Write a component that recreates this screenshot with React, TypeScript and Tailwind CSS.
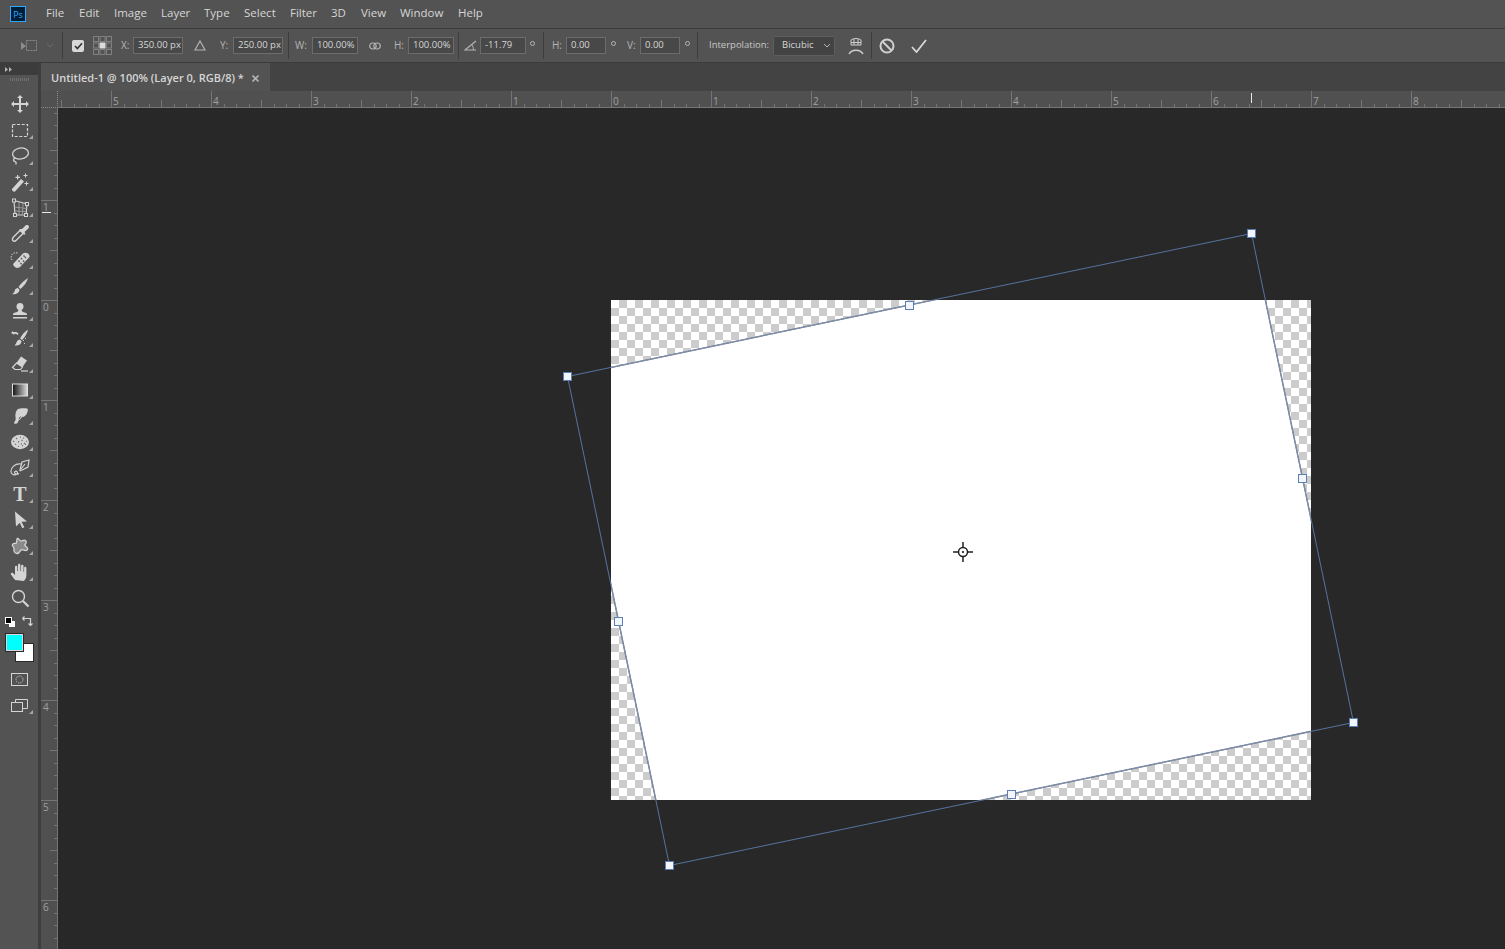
const UI_FONT = { fontFamily: '"Open Sans", "Liberation Sans", sans-serif' }

const MENU = [
  { label: 'File', width: 'w-[33px]' },
  { label: 'Edit', width: 'w-[35px]' },
  { label: 'Image', width: 'w-[47px]' },
  { label: 'Layer', width: 'w-[43px]' },
  { label: 'Type', width: 'w-[40px]' },
  { label: 'Select', width: 'w-[46px]' },
  { label: 'Filter', width: 'w-[41px]' },
  { label: '3D', width: 'w-[30px]' },
  { label: 'View', width: 'w-[39px]' },
  { label: 'Window', width: 'w-[58px]' },
  { label: 'Help', width: 'w-[30px]' },
]

function Sep({ className }: { className: string }) {
  return <div className={`w-px h-[27px] bg-[#3d3d3d] shrink-0 ${className}`} />
}

function Label({ text, className }: { text: string; className: string }) {
  return <span className={`text-[10px] text-[#b4b4b4] shrink-0 ${className}`}>{text}</span>
}

function Field({ value, className }: { value: string; className: string }) {
  return (
    <div className={`h-[17px] shrink-0 flex items-center pl-[4px] bg-[#484848] border border-[#6c6c6c] text-[9.5px] text-[#d6d6d6] whitespace-nowrap overflow-hidden ${className}`}>
      {value}
    </div>
  )
}

function Deg({ className }: { className: string }) {
  return <div className={`w-[5px] h-[5px] rounded-full border border-[#b4b4b4] shrink-0 -translate-y-[2px] ${className}`} />
}

function OptionsBar() {
  return (
    <div className="h-[34px] flex items-center bg-[#535353] border-t border-[#3b3b3b] shrink-0">
      <svg width="17" height="14" viewBox="0 0 17 14" className="ml-[21px] shrink-0" fill="none">
        <path d="M0 3l5 4-5 4z" fill="#8c8c8c" />
        <rect x="5.5" y="1.5" width="10" height="10" stroke="#8c8c8c" strokeDasharray="2 1" />
      </svg>
      <svg width="8" height="5" viewBox="0 0 8 5" className="ml-[8px] shrink-0" fill="none">
        <path d="M1 1l3 3 3-3" stroke="#6c6c6c" />
      </svg>
      <Sep className="ml-[8px]" />
      <div className="ml-[9px] w-[12px] h-[12px] rounded-[2px] bg-[#d8d8d8] shrink-0 flex items-center justify-center">
        <svg width="9" height="8" viewBox="0 0 9 8" fill="none">
          <path d="M1 4l2.4 2.6L8 1.2" stroke="#333" strokeWidth="1.6" />
        </svg>
      </div>
      <svg width="19" height="19" viewBox="0 0 19 19" className="ml-[9px] shrink-0" fill="none" stroke="#808080">
        <rect x="0.5" y="0.5" width="5" height="5" />
        <rect x="7" y="0.5" width="5" height="5" />
        <rect x="13.5" y="0.5" width="5" height="5" />
        <rect x="0.5" y="7" width="5" height="5" />
        <rect x="7" y="7" width="5" height="5" fill="#dcdcdc" stroke="#dcdcdc" />
        <rect x="13.5" y="7" width="5" height="5" />
        <rect x="0.5" y="13.5" width="5" height="5" />
        <rect x="7" y="13.5" width="5" height="5" />
        <rect x="13.5" y="13.5" width="5" height="5" />
      </svg>
      <Label text="X:" className="ml-[9px] w-[12px]" />
      <Field value="350.00 px" className="w-[50px]" />
      <svg width="12" height="11" viewBox="0 0 12 11" className="ml-[11px] shrink-0" fill="none">
        <path d="M6 1L11 10H1z" stroke="#b4b4b4" strokeWidth="1.2" />
      </svg>
      <Label text="Y:" className="ml-[14px] w-[13px]" />
      <Field value="250.00 px" className="w-[50px]" />
      <Sep className="ml-[5px]" />
      <Label text="W:" className="ml-[6px] w-[17px]" />
      <Field value="100.00%" className="w-[46px]" />
      <svg width="12" height="8" viewBox="0 0 12 8" className="ml-[11px] shrink-0" fill="none">
        <rect x="0.7" y="1" width="6.5" height="6" rx="3" stroke="#b4b4b4" strokeWidth="1.2" />
        <rect x="4.8" y="1" width="6.5" height="6" rx="3" stroke="#b4b4b4" strokeWidth="1.2" />
      </svg>
      <Label text="H:" className="ml-[13px] w-[14px]" />
      <Field value="100.00%" className="w-[46px]" />
      <Sep className="ml-[4px]" />
      <svg width="13" height="11" viewBox="0 0 13 11" className="ml-[5px] shrink-0" fill="none">
        <path d="M12 1L1 10h11" stroke="#b4b4b4" strokeWidth="1.2" />
        <path d="M8 5c1 1 1.400 3 1.400 5" stroke="#b4b4b4" />
      </svg>
      <Field value="-11.79" className="ml-[3px] w-[46px]" />
      <Deg className="ml-[4px]" />
      <Sep className="ml-[8px]" />
      <Label text="H:" className="ml-[8px] w-[14px]" />
      <Field value="0.00" className="w-[40px]" />
      <Deg className="ml-[5px]" />
      <Label text="V:" className="ml-[11px] w-[13px]" />
      <Field value="0.00" className="w-[40px]" />
      <Deg className="ml-[5px]" />
      <Sep className="ml-[7px]" />
      <span className="ml-[11px] w-[64px] shrink-0 whitespace-nowrap text-[9.5px] text-[#c8c8c8]">Interpolation:</span>
      <div className="w-[62px] h-[20px] shrink-0 flex items-center justify-between pl-[8px] pr-[3px] bg-[#434343] border border-[#5e5e5e] rounded-[2px] text-[9.5px] text-[#d6d6d6]">
        Bicubic
        <svg width="8" height="5" viewBox="0 0 8 5" fill="none">
          <path d="M1 1l3 3 3-3" stroke="#b4b4b4" />
        </svg>
      </div>
      <svg width="16" height="18" viewBox="0 0 16 18" className="ml-[13px] shrink-0" fill="none" stroke="#d0d0d0">
        <path d="M3 3c3-2 7-2 10 0v5H3z" />
        <path d="M6 2v6M10 2v6M3 5.500h10" />
        <path d="M1 17c3-5 11-5 14 0" strokeWidth="1.4" />
      </svg>
      <Sep className="ml-[7px]" />
      <svg width="16" height="16" viewBox="0 0 16 16" className="ml-[7px] shrink-0" fill="none" stroke="#d0d0d0" strokeWidth="2">
        <circle cx="8" cy="8" r="6.500" />
        <path d="M3.500 3.500l9 9" />
      </svg>
      <svg width="16" height="14" viewBox="0 0 16 14" className="ml-[16px] shrink-0" fill="none" stroke="#d8d8d8" strokeWidth="1.800">
        <path d="M1 8l4.500 5L15 1" />
      </svg>
    </div>
  )
}

const C = '#d4d4d4'

const TOOLS: { id: string; more: boolean; draw: React.ReactNode }[] = [
  {
    id: 'move',
    more: false,
    draw: <path d="M10 1l3 3h-2v5h5V7l3 3-3 3v-2h-5v5h2l-3 3-3-3h2v-5H4v2l-3-3 3-3v2h5V4H7z" fill={C} />,
  },
  {
    id: 'marquee',
    more: true,
    draw: <rect x="2.500" y="4.500" width="15" height="12" fill="none" stroke={C} strokeWidth="1.200" strokeDasharray="3 1.600" />,
  },
  {
    id: 'lasso',
    more: true,
    draw: (
      <g fill="none" stroke={C} strokeWidth="1.300">
        <ellipse cx="10.500" cy="7.500" rx="8" ry="5.500" transform="rotate(-8 10.500 7.500)" />
        <path d="M5 12c-2 1-2 3 0 3.500 1 .3 1.500 1 .8 3" />
      </g>
    ),
  },
  {
    id: 'wand',
    more: true,
    draw: (
      <g fill={C}>
        <path d="M2 17l9-10 3 2.500-9 10c-1 .8-3.500-1-3-2.500z" />
        <path d="M7 3h1.200v1.800H10V6H8.200v1.500H7V6H5.400V4.800H7zM15 1.500h1V3h1.500v1H16v1.500h-1V4h-1.500V3H15zM16 9.500h1V11h1.500v1H17v1.500h-1V12h-1.500v-1H16z" />
      </g>
    ),
  },
  {
    id: 'crop',
    more: true,
    draw: (
      <g fill="none" stroke={C}>
        <path d="M4 2.500l13 3.500-1 11H5z" strokeWidth="1.200" />
        <path d="M9 4v13M13 5l-.5 12M4.500 9l12 1.500M5 13l11 .5" stroke="#9a9a9a" />
        <rect x="2.500" y="1" width="3" height="3" fill="#535353" />
        <rect x="15.500" y="4.500" width="3" height="3" fill="#535353" />
        <rect x="3.500" y="15.500" width="3" height="3" fill="#535353" />
        <rect x="14.500" y="15.500" width="3" height="3" fill="#535353" />
      </g>
    ),
  },
  {
    id: 'eyedropper',
    more: true,
    draw: (
      <g>
        <path d="M3.500 13l7-7 3 3-7 7c-1 1-2.500 1.800-3.500.8S2.500 14 3.500 13z" fill="none" stroke={C} strokeWidth="1.400" />
        <path d="M10 5l2 0 3.500-3.500c1-1 3.500-.5 3.500 1.500 0 .8-.4 1.200-1 1.800L14.500 8l1 2-1.500.8L9 6.500z" fill={C} />
      </g>
    ),
  },
  {
    id: 'heal',
    more: true,
    draw: (
      <g>
        <path d="M3.500 13.500l9.500-10c1.800-1.800 7-.5 6.500 3.500l-9 9.500c-2 2-4.500 1.500-5.500.5s-2.500-2-1.500-3.500z" fill={C} />
        <path d="M8.500 10.500l1.200 1.200M11 8l1.200 1.200M10.500 13l1.200 1.200M13 10.500l1.200 1.200M13.500 5.500l1.200 1.200M16 8l-1-1" stroke="#555" strokeWidth="1.400" />
        <path d="M2 10C-.5 6.500 2.500 1.500 7.500 3" fill="none" stroke={C} strokeDasharray="1.400 1.200" />
      </g>
    ),
  },
  {
    id: 'brush',
    more: true,
    draw: (
      <g fill={C}>
        <path d="M18 2c-3 2-7 5-9.500 9l2 2C14 10 17 6 18 2z" />
        <path d="M7.800 12c-2.500.3-3 2-3.300 3.500-.2 1-1 1.800-2.500 2.500 3.500.8 7-.5 7.600-4.200z" />
      </g>
    ),
  },
  {
    id: 'stamp',
    more: true,
    draw: (
      <g fill={C}>
        <circle cx="10" cy="4.500" r="3.500" />
        <path d="M8.500 7h3c0 2 .5 3 3 3.500 2 .3 2.500 1 2.500 2.500H3c0-1.500.5-2.200 2.500-2.500C8 10 8.500 9 8.500 7z" />
        <rect x="3" y="15" width="14" height="1.500" />
      </g>
    ),
  },
  {
    id: 'history',
    more: true,
    draw: (
      <g fill={C}>
        <path d="M18 1.500c-3 2-6 5-8 9l2 1.500c3-3 5-6.500 6-10.500z" />
        <path d="M9.500 11.500c-2 .3-2.500 1.800-3 3-.3 1-1 2-2 3 3.500.5 7-.8 7-4.500z" />
        <path d="M1 5l2-2 .2 1.300C5 3.800 7 4 8.500 5.500L7.800 7C6.500 6 5 5.600 3.800 6L5 7.200z" />
        <path d="M13 12h1v1h-1zM15 10h1v1h-1zM14 15h1v1h-1z" />
      </g>
    ),
  },
  {
    id: 'eraser',
    more: true,
    draw: (
      <g>
        <path d="M11 2.500l6 4-4.500 6.500-6-4z" fill={C} />
        <path d="M6.500 9l6 4-2 2.500H5L2.500 13.500z" fill="none" stroke={C} strokeWidth="1.200" />
        <path d="M11 17h7" stroke={C} strokeWidth="1.200" />
      </g>
    ),
  },
  {
    id: 'gradient',
    more: true,
    draw: (
      <g>
        <defs>
          <linearGradient id="tool-grad">
            <stop offset="0" stopColor="#111" />
            <stop offset="1" stopColor="#ddd" />
          </linearGradient>
        </defs>
        <rect x="2.500" y="4" width="15" height="12" fill="url(#tool-grad)" stroke="#dedede" />
      </g>
    ),
  },
  {
    id: 'dodge',
    more: true,
    draw: (
      <g>
        <path d="M8 3c2-1 6-1 9-.5.800.2 1 1 .800 2-.5 3-2 5.500-4.500 6.500l-1.300-.3c-.5 1.500-1.500 2.500-3.200 3.500L7.500 17c-.5.800-2.500 1.200-3.300.5-.4-.4 0-1.200.4-1.700.8-1.200 1.400-2.500 1-4C5 9 5.500 5 8 3z" fill={C} />
        <path d="M9 13l1.500-2.500" stroke="#535353" />
      </g>
    ),
  },
  {
    id: 'sponge',
    more: true,
    draw: (
      <g>
        <ellipse cx="10" cy="10" rx="9" ry="7.200" fill={C} />
        <path d="M3 9l1.200.8M6 6l1 1M10 4.500l.8 1M14 5.500l-.8 1M17 9l-1 .5M5 12.500l1.200-.5M8 9.500l1.200.8M11.500 8l1 .8M14 11l1 .8M8 14l1 .6M12 14l1-.6M16 12.500l-1-.4M11 11.500l.8.8" stroke="#6a6a6a" strokeWidth="1.100" />
      </g>
    ),
  },
  {
    id: 'pen',
    more: true,
    draw: (
      <g fill="none" stroke={C} strokeWidth="1.200">
        <path d="M10 12l2-8 7-2-1 7-7 3.500c-1 .4-1.400-.2-1-.5z" />
        <path d="M11 11l4-5" />
        <path d="M11 6C5 5 .5 10 1 14c.4 3 4 3.500 6 2 1.500-1.200-.5-3.500-2-2.500-1.500 1.200 1 4 4 2" />
      </g>
    ),
  },
  {
    id: 'type',
    more: true,
    draw: (
      <text x="10" y="17" textAnchor="middle" fontSize="20" fontWeight="700" fontFamily='"Liberation Serif", serif' fill={C}>
        T
      </text>
    ),
  },
  {
    id: 'path',
    more: true,
    draw: <path d="M5 1.500L17 11.500l-5.500 .3 2.800 5.500-2 1-2.500-5.500L6 16.500z" fill={C} />,
  },
  {
    id: 'shape',
    more: true,
    draw: <path d="M8 2.500c1.500 1 2 3 3.500 2.500s2.500-1.500 4-.5c1.500 1.200.5 3-.5 4s1.500 2 2.500 3.500c.8 1.500-1 3-2.500 2.500s-3-1.500-4-.5-1.500 3.500-4 3.500-3.500-2.500-3-4.500-2.500-2.500-1.500-4.500c1-1.800 3-.5 3.800-1.500S6.500 1.500 8 2.500z" fill="#8a8a8a" stroke={C} strokeWidth="1.300" />,
  },
  {
    id: 'hand',
    more: true,
    draw: <path d="M5 18c-1.500-2-3-4-4-5.500-.8-1.400 1-2.500 2.200-1.300L5 13V5c0-1.700 2.300-1.700 2.300 0v4h.7V3c0-1.700 2.400-1.700 2.400 0v6h.7V4c0-1.700 2.400-1.700 2.400 0v6h.6V6c0-1.600 2.300-1.600 2.300 0v7.500c0 2.500-1.500 4.500-2.500 5.500z" fill={C} />,
  },
  {
    id: 'zoom',
    more: false,
    draw: (
      <g fill="none" stroke={C}>
        <circle cx="8.500" cy="8.500" r="6" strokeWidth="1.400" />
        <path d="M13 13l5.500 5.500" strokeWidth="2.200" />
      </g>
    ),
  },
]

function Toolbar() {
  return (
    <div className="w-[41px] shrink-0 flex flex-col bg-[#535353] border-r-[3px] border-[#3e3e3e]">
      <div className="h-[12px] bg-[#3c3c3c] flex items-center pl-[5px] shrink-0">
        <svg width="8" height="5" viewBox="0 0 8 5" fill="#b4b4b4">
          <path d="M0 0l3 2.500L0 5zM4 0l3 2.500L4 5z" />
        </svg>
      </div>
      <div className="h-[16px] flex justify-center pt-[3px] shrink-0">
        <div className="w-[19px] h-[3px] bg-[repeating-linear-gradient(90deg,#707070_0_1px,transparent_1px_2px)]" />
      </div>
      {TOOLS.map(tool => (
        <div key={tool.id} className="relative h-[26px] shrink-0 flex items-center justify-center pl-[1px]">
          <svg width="20" height="20" viewBox="0 0 20 20">{tool.draw}</svg>
          {tool.more && (
            <svg width="4" height="4" viewBox="0 0 4 4" className="absolute left-[29px] top-[18px]" fill="#a8a8a8">
              <path d="M4 0v4H0z" />
            </svg>
          )}
        </div>
      ))}
      {/* colour swatches */}
      <div className="relative h-[55px] shrink-0">
        <div className="absolute left-[5px] top-[6px] w-[7px] h-[7px] bg-black border border-white z-10" />
        <div className="absolute left-[9px] top-[10px] w-[6px] h-[6px] bg-white" />
        <svg width="11" height="11" viewBox="0 0 11 11" className="absolute left-[22px] top-[5px]" fill="none" stroke="#d4d4d4" strokeWidth="1.200">
          <path d="M1 2.500h7.500V9M0.500 2.500L2.500 .5M.5 2.500l2 2M6.500 7.500l2 2 2-2" />
        </svg>
        <div className="absolute left-[15px] top-[32px] w-[19px] h-[19px] bg-white border border-[#2a2a2a]" />
        <div className="absolute left-[5px] top-[22px] w-[19px] h-[19px] bg-[#00ffff] border border-[#2a2a2a] outline outline-[#d8d8d8] -outline-offset-2" />
      </div>
      <div className="h-[26px] shrink-0 flex items-center justify-center">
        <svg width="17" height="13" viewBox="0 0 17 13" fill="none" stroke="#d4d4d4">
          <rect x="0.500" y="0.500" width="16" height="12" />
          <circle cx="8.500" cy="6.500" r="3.500" strokeDasharray="1 1" />
        </svg>
      </div>
      <div className="relative h-[26px] shrink-0 flex items-center justify-center">
        <svg width="17" height="13" viewBox="0 0 17 13" fill="none" stroke="#d4d4d4">
          <rect x="0.500" y="3.500" width="11" height="9" />
          <path d="M4.500 3.500V.5h12v9h-5" />
        </svg>
        <svg width="4" height="4" viewBox="0 0 4 4" className="absolute left-[29px] top-[18px]" fill="#a8a8a8">
          <path d="M4 0v4H0z" />
        </svg>
      </div>
    </div>
  )
}

function HRuler() {
  const ticks = Array.from({ length: 120 }, (_, i) => i)
  const labels = [5, 4, 3, 2, 1, 0, 1, 2, 3, 4, 5, 6, 7, 8]
  return (
    <svg width="1447" height="17" viewBox="58 91 1447 17" className="block">
      {ticks.map(i => {
        const x = Math.round(11 + i * 12.5) + 0.5
        const len = i % 8 === 0 ? 17 : i % 4 === 0 ? 8 : 4
        return <path key={i} d={`M${x} 108v-${len}`} stroke="#757575" />
      })}
      <path d="M58 107.500h1447" stroke="#757575" />
      {labels.map((n, i) => (
        <text key={i} x={113 + i * 100} y="105" fontSize="10" fill="#a0a0a0" fontFamily='"Open Sans", sans-serif'>
          {n}
        </text>
      ))}
      <path d="M1251.500 93v10" stroke="#e8e8e8" />
    </svg>
  )
}

function VRuler() {
  const ticks = Array.from({ length: 68 }, (_, i) => i)
  const labels = [1, 0, 1, 2, 3, 4, 5, 6]
  return (
    <svg width="17" height="841" viewBox="41 108 17 841" className="block shrink-0">
      {ticks.map(i => {
        const y = Math.round(100 + i * 12.5) + 0.5
        const major = i % 8 === 0
        const len = major ? 17 : i % 4 === 0 ? 8 : 4
        return <path key={i} d={`M58 ${y}h-${len}`} stroke="#757575" />
      })}
      <path d="M57.500 108v841" stroke="#757575" />
      {labels.map((n, i) => (
        <text key={i} x="43" y={211 + i * 100} fontSize="10" fill="#a0a0a0" fontFamily='"Open Sans", sans-serif'>
          {n}
        </text>
      ))}
      <path d="M42 212.500h9" stroke="#e8e8e8" />
    </svg>
  )
}

const QUAD = '567.500,376.500 1251.500,233.500 1353.500,722.500 669.500,865.500'
const HANDLES = [
  [567, 376],
  [909, 305],
  [1251, 233],
  [1302, 478],
  [1353, 722],
  [1011, 794],
  [669, 865],
  [618, 621],
]

function DocumentCanvas() {
  return (
    <svg width="1447" height="841" viewBox="58 108 1447 841" className="block">
      <defs>
        <pattern id="checker" x="611" y="300" width="16" height="16" patternUnits="userSpaceOnUse">
          <rect width="16" height="16" fill="#fff" />
          <rect x="8" width="8" height="8" fill="#ccc" />
          <rect y="8" width="8" height="8" fill="#ccc" />
        </pattern>
        <clipPath id="doc">
          <rect x="611" y="300" width="700" height="500" />
        </clipPath>
      </defs>
      <rect x="611" y="300" width="700" height="500" fill="url(#checker)" />
      <polygon points={QUAD} fill="#fff" clipPath="url(#doc)" />
      <polygon points={QUAD} fill="none" stroke="#5673a0" strokeWidth="1" />
      <polygon points={QUAD} fill="none" stroke="#7f8ca3" strokeWidth="1.500" clipPath="url(#doc)" />
      {HANDLES.map(([x, y]) => (
        <rect key={`${x}-${y}`} x={x - 3.5} y={y - 3.5} width="8" height="8" fill="#f2f6fc" stroke="#5a7fb4" shapeRendering="crispEdges" />
      ))}
      <g stroke="#222" fill="none">
        <circle cx="963" cy="552" r="4.500" strokeWidth="1.500" />
        <path d="M953 552h5.500M967.500 552h5.500M963 542v5.500M963 556.500v5.500" strokeWidth="1.500" />
        <circle cx="963" cy="552" r="0.700" fill="#222" />
      </g>
    </svg>
  )
}

export default function App() {
  return (
    <div className="w-[1505px] h-[949px] overflow-hidden flex flex-col bg-[#282828]" style={UI_FONT}>
      {/* Menu bar */}
      <div className="h-[28px] flex items-center bg-[#535353] shrink-0">
        <div className="ml-[10px] w-[16px] h-[16px] bg-[#001e36] border border-[#31a8ff] flex items-center justify-center text-[9px] leading-none text-[#31a8ff]">
          Ps
        </div>
        <div className="ml-[20px] pb-[2px] flex text-[11.5px] text-[#d6d6d6]">
          {MENU.map(m => (
            <span key={m.label} className={m.width}>
              {m.label}
            </span>
          ))}
        </div>
      </div>

      <OptionsBar />

      <div className="h-[1px] bg-[#3b3b3b] shrink-0" />

      <div className="flex flex-1 min-h-0">
        <Toolbar />

        <div className="flex-1 flex flex-col min-w-0">
          {/* Document tabs */}
          <div className="h-[28px] flex bg-[#434343] shrink-0">
            <div className="w-[229px] flex items-center bg-[#535353] pl-[10px] pt-[2px] text-[11px] font-semibold text-[#d6d6d6] whitespace-nowrap">
              Untitled-1 @ 100% (Layer 0, RGB/8) *
              <svg width="7" height="7" viewBox="0 0 7 7" className="ml-auto mr-[11px]" stroke="#b0b0b0" strokeWidth="1.600">
                <path d="M.5 .5l6 6M6.500 .5l-6 6" />
              </svg>
            </div>
          </div>

          {/* Rulers */}
          <div className="h-[17px] flex bg-[#505050] shrink-0">
            <div className="w-[17px] shrink-0 border-r border-b border-dotted border-[#8a8a8a]" />
            <HRuler />
          </div>

          <div className="flex flex-1 min-h-0">
            <div className="w-[17px] shrink-0 bg-[#505050]">
              <VRuler />
            </div>
            <DocumentCanvas />
          </div>
        </div>
      </div>
    </div>
  )
}
